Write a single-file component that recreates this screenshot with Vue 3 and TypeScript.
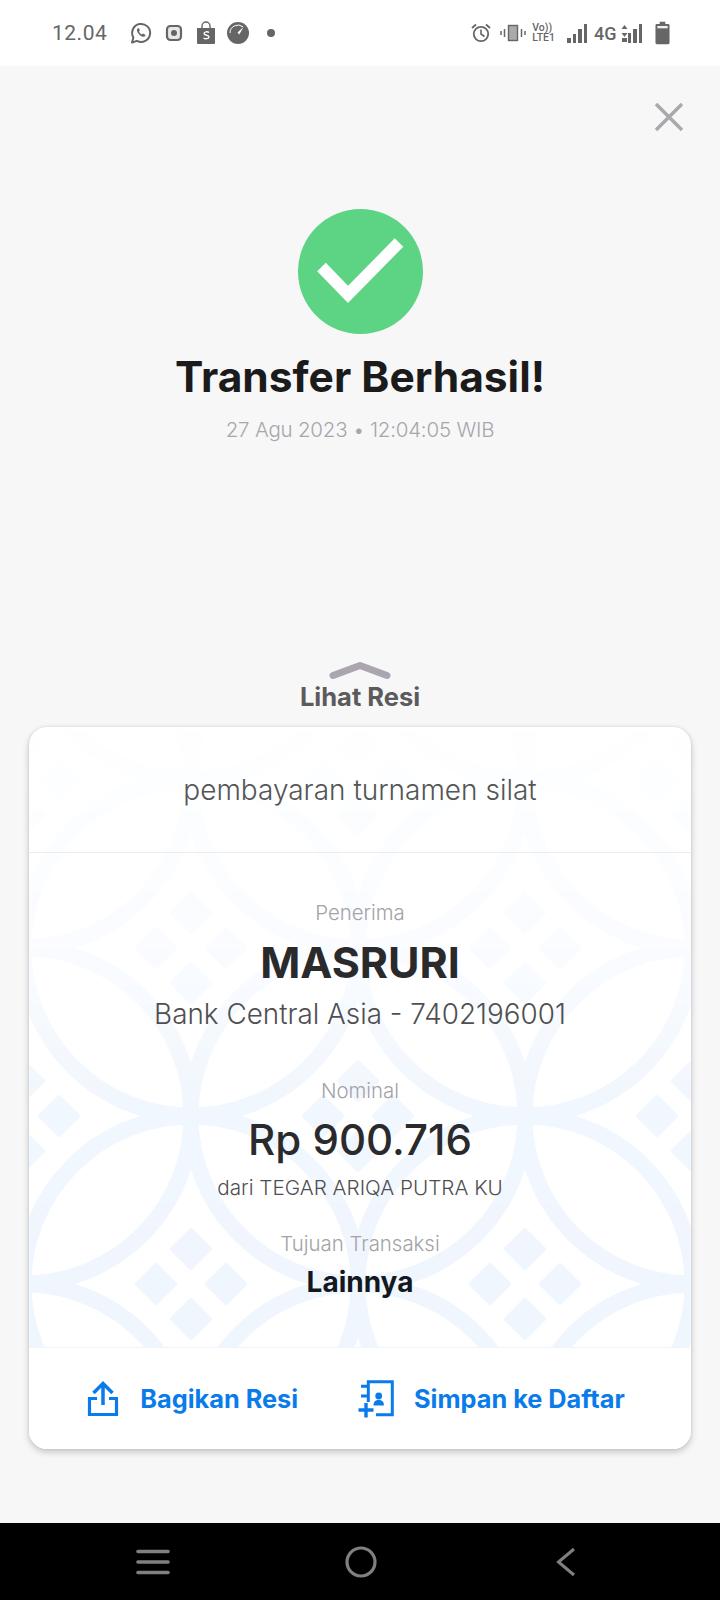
<template>
  <div class="screen">
    <header class="status-bar">
      <div class="status-left">
        <span class="clock">12.04</span>
        <svg width="24" height="24" viewBox="0 0 24 24" style="margin-left:22px"><path d="M3 21.500l1.400-5A9 9 0 1 1 8 19.900z" fill="none" stroke="#666" stroke-width="2" stroke-linejoin="round"/><path d="M8.600 7.500c-1 1-.9 2.700.5 4.700 1.500 2 3.300 3.300 5.200 3.500 1 .1 2.200-.8 2.200-1.800l-2.400-1.300-1.100 1c-1.200-.4-2.600-1.900-3-3.100l.9-1.100-1.100-2.400z" fill="#666"/></svg>
        <svg width="18" height="18" viewBox="0 0 18 18" style="margin-left:12px"><rect x="2" y="2" width="14" height="14" rx="3.500" fill="#e8e8e8" stroke="#666" stroke-width="2.200"/><circle cx="9" cy="9" r="3" fill="#666"/></svg>
        <svg width="20" height="24" viewBox="0 0 20 24" style="margin-left:13px"><path d="M1 7h18v15a1 1 0 0 1-1 1H2a1 1 0 0 1-1-1z" fill="#666"/><path d="M6 7V5a4 4 0 0 1 8 0v2" fill="none" stroke="#666" stroke-width="1.400"/><path d="M13 11.500c-1-1-5-1.200-5 1 0 2.200 5 1.300 5 3.500 0 2.200-4 2-5.500 1" fill="none" stroke="#fff" stroke-width="1.300"/></svg>
        <svg width="24" height="24" viewBox="0 0 24 24" style="margin-left:10px"><circle cx="12" cy="12" r="11" fill="#666"/><path d="M4 12a8 8 0 0 1 13-6.200" fill="none" stroke="#fff" stroke-width="1"/><path d="M17.500 6l-6 5.500 1.800 2z" fill="#fff"/></svg>
        <span class="dot"></span>
      </div>
      <div class="status-right">
        <svg width="20" height="20" viewBox="0 0 20 20"><circle cx="10" cy="11" r="7.200" fill="none" stroke="#666" stroke-width="1.800"/><path d="M10 6.500V11l3.500 2.500" fill="none" stroke="#666" stroke-width="1.600"/><path d="M1 5l4-3.500M19 5l-4-3.500" stroke="#666" stroke-width="1.800"/></svg>
        <svg width="26" height="18" viewBox="0 0 26 18" style="margin-left:9px"><rect x="8.500" y="1.500" width="9" height="15" fill="#aaa" stroke="#666" stroke-width="1.400"/><path d="M1 7v4M4.500 5v8M21.500 5v8M25 7v4" stroke="#666" stroke-width="1.500"/></svg>
        <div class="volte"><span>Vo))</span><span>LTE1</span></div>
        <div class="bars four">
          <i style="height:5px"></i><i style="height:9px"></i><i style="height:14px"></i><i style="height:19px"></i>
        </div>
        <span class="net">4G</span>
        <svg width="7" height="18" viewBox="0 0 7 18" style="margin-left:4px"><path d="M3.500 1l3 4h-6zM3.500 13l3-4h-6z" fill="#666"/><rect x="1" y="14" width="5" height="4" fill="#666"/></svg>
        <div class="bars three">
          <i style="height:10px"></i><i style="height:14px"></i><i style="height:19px"></i>
        </div>
        <svg width="15" height="24" viewBox="0 0 16 24" style="margin-left:13px"><path d="M5 0h6v2.500h3a1.500 1.500 0 0 1 1.500 1.500v18.500A1.500 1.500 0 0 1 14 24H2a1.500 1.500 0 0 1-1.500-1.500V4A1.500 1.500 0 0 1 2 2.500h3z" fill="#666"/><rect x="2.500" y="4.500" width="11" height="2.500" fill="#eee"/></svg>
      </div>
    </header>

    <main class="content">
      <button class="close" aria-label="Tutup">
        <svg width="32" height="32" viewBox="0 0 32 32"><path d="M3 3l26 26M29 3L3 29" stroke="#aaa7ad" stroke-width="3.400"/></svg>
      </button>

      <section class="result">
        <div class="check">
          <svg width="125" height="125" viewBox="0 0 125 125"><path d="M23.500 58L50 85.500l51-52" fill="none" stroke="#fff" stroke-width="12"/></svg>
        </div>
        <h1 class="title">Transfer Berhasil!</h1>
        <p class="stamp">27 Agu 2023 • 12:04:05 WIB</p>
      </section>

      <div class="handle">
        <svg width="62" height="18" viewBox="0 0 62 18"><path d="M4 13.500L31 3.500l27 10" fill="none" stroke="#aaa5ae" stroke-width="7" stroke-linecap="round" stroke-linejoin="round"/></svg>
        <span>Lihat Resi</span>
      </div>

      <article class="card">
        <svg class="pattern" width="662" height="620" viewBox="0 0 662 620" aria-hidden="true">
          <g fill="none" stroke="#f0f6fe" stroke-width="16">
            <circle v-for="c in rings" :key="c.id" :cx="c.x" :cy="c.y" r="167.500" />
          </g>
          <g fill="#f0f6fe">
            <rect v-for="d in diamonds" :key="d.id" :x="d.x - 15.500" :y="d.y - 15.500" width="31" height="31" rx="2" :transform="`rotate(45 ${d.x} ${d.y})`" />
          </g>
        </svg>
        <div class="memo">pembayaran turnamen silat</div>
        <div class="details">
          <div class="block">
            <p class="label">Penerima</p>
            <p class="name">MASRURI</p>
            <p class="sub large">Bank Central Asia - 7402196001</p>
          </div>
          <div class="block nominal">
            <p class="label">Nominal</p>
            <p class="amount">Rp 900.716</p>
            <p class="sub">dari TEGAR ARIQA PUTRA KU</p>
          </div>
          <div class="block purpose">
            <p class="label">Tujuan Transaksi</p>
            <p class="value">Lainnya</p>
          </div>
        </div>
        <div class="actions">
          <button class="action">
            <svg width="34" height="38" viewBox="0 0 34 38"><path d="M11 18.500H3.500v16h27v-16H23" fill="none" stroke="#0a7bea" stroke-width="3.200"/><path d="M17 25V4M7.500 13L17 3.500l9.500 9.500" fill="none" stroke="#0a7bea" stroke-width="3.500"/></svg>
            <span>Bagikan Resi</span>
          </button>
          <button class="action">
            <svg width="36" height="38" viewBox="0 0 36 38"><path d="M18 34.700h16.300V1.700h-24V22M3 6.300h7.300M3 16h7.300" fill="none" stroke="#0a7bea" stroke-width="3"/><path d="M.5 30h15M8 23v14.500" stroke="#0a7bea" stroke-width="3.400"/><circle cx="20.700" cy="16" r="3.400" fill="#0a7bea"/><path d="M15.500 25.500c0-4 2-5.500 5.200-5.500s5.200 1.500 5.200 5.500z" fill="#0a7bea"/></svg>
            <span>Simpan ke Daftar</span>
          </button>
        </div>
      </article>
    </main>

    <footer class="nav-bar">
      <svg width="34" height="26" viewBox="0 0 34 26"><path d="M2 2.500h30M2 13h30M2 23.500h30" stroke="#808080" stroke-width="3.600" stroke-linecap="round"/></svg>
      <svg class="home" width="32" height="32" viewBox="0 0 32 32"><circle cx="16" cy="16" r="14" fill="none" stroke="#808080" stroke-width="3.200"/></svg>
      <svg width="20" height="30" viewBox="0 0 20 30"><path d="M18 2L2.500 15 18 28" fill="none" stroke="#808080" stroke-width="3"/></svg>
    </footer>
  </div>
</template>

<script setup lang="ts">
interface Point { id: string; x: number; y: number }

// kawung lattice: each ring sits on a checkerboard, half a tile apart
const halfX = 167
const halfY = 168
const originX = 162
const originY = 221

const rings: Point[] = []
const diamonds: Point[] = []
for (let row = -2; row < 4; row++) {
  for (let col = -1; col < 5; col++) {
    if ((row + col) % 2 !== 0) continue
    const x = originX + (col - 1) * halfX + halfX
    const y = originY + row * halfY
    rings.push({ id: `${row}-${col}`, x, y })
    ;[[0, -35], [-35, 0], [35, 0], [0, 35]].forEach(([dx, dy], i) => {
      diamonds.push({ id: `${row}-${col}-${i}`, x: x + dx, y: y + dy })
    })
  }
}
</script>

<style>
html, body { margin: 0; background: #f7f7f8; }
</style>

<style scoped>
.screen {
  width: 720px;
  height: 1600px;
  display: flex;
  flex-direction: column;
  background: #f7f7f8;
  font-family: Inter, "Liberation Sans", sans-serif;
  overflow: hidden;
}
.status-bar {
  height: 66px;
  flex: none;
  background: #fff;
  display: flex;
  align-items: center;
  justify-content: space-between;
  padding: 0 50px 0 52px;
  color: #666;
}
.status-left, .status-right {
  display: flex;
  align-items: center;
}
.clock {
  font-family: Roboto, sans-serif;
  font-size: 21px;
  letter-spacing: 0.5px;
}
.dot {
  width: 8px;
  height: 8px;
  border-radius: 50%;
  background: #666;
  margin-left: 17px;
}
.volte {
  margin-left: 6px;
  display: flex;
  flex-direction: column;
  font-family: Roboto, sans-serif;
  font-size: 10.500px;
  line-height: 10px;
  font-weight: 500;
}
.bars {
  display: flex;
  align-items: flex-end;
  gap: 2px;
  height: 19px;
}
.bars i {
  width: 3.500px;
  background: #666;
}
.bars.four { margin-left: 12px; }
.net {
  font-family: Roboto, sans-serif;
  font-size: 18px;
  font-weight: 500;
  margin-left: 7px;
}
.content {
  flex: 1;
  position: relative;
  display: flex;
  flex-direction: column;
  align-items: center;
  min-height: 0;
}
.close {
  position: absolute;
  top: 35px;
  right: 35px;
  width: 32px;
  height: 32px;
  padding: 0;
  border: 0;
  background: none;
}
.result {
  margin-top: 143px;
  display: flex;
  flex-direction: column;
  align-items: center;
}
.check {
  width: 125px;
  height: 125px;
  border-radius: 50%;
  background: #5dd384;
}
.title {
  margin: 18px 0 0;
  font-size: 42.500px;
  line-height: 50px;
  font-weight: 700;
  color: #1b1b1b;
}
.stamp {
  margin: 14px 0 0;
  font-size: 20.500px;
  line-height: 28px;
  letter-spacing: -0.2px;
  font-weight: 300;
  color: #a6a6ac;
}
.handle {
  margin-top: 218px;
  display: flex;
  flex-direction: column;
  align-items: center;
  font-size: 25.500px;
  line-height: 30px;
  font-weight: 700;
  color: #5d5a5c;
}
.handle svg {
  display: block;
  margin-bottom: 2px;
}
.card {
  position: relative;
  margin-top: 15px;
  width: 662px;
  height: 722px;
  flex: none;
  display: flex;
  flex-direction: column;
  background: #fff;
  border-radius: 18px;
  box-shadow: 0 3px 7px rgba(0, 0, 0, 0.2), 0 0 3px rgba(0, 0, 0, 0.1);
  overflow: hidden;
}
.pattern {
  position: absolute;
  left: 0;
  top: 0;
  /* pattern fades out towards the top of the card */
  -webkit-mask-image: linear-gradient(to bottom, rgba(0, 0, 0, 0.05), rgba(0, 0, 0, 0.35) 35%, rgba(0, 0, 0, 0.9) 60%, #000);
  mask-image: linear-gradient(to bottom, rgba(0, 0, 0, 0.05), rgba(0, 0, 0, 0.35) 35%, rgba(0, 0, 0, 0.9) 60%, #000);
}
.memo {
  position: relative;
  height: 126px;
  flex: none;
  display: flex;
  align-items: center;
  justify-content: center;
  font-size: 28px;
  font-weight: 300;
  color: #555;
  border-bottom: 1px solid #ececef;
  box-sizing: border-box;
}
.details {
  position: relative;
  flex: 1;
  min-height: 0;
  text-align: center;
  padding-top: 48px;
}
.block p { margin: 0; }
.label {
  font-size: 20.400px;
  line-height: 24px;
  font-weight: 300;
  color: #a2a2a8;
}
.name {
  margin-top: 9px !important;
  font-size: 43px;
  line-height: 56px;
  font-weight: 700;
  color: #2a2a2d;
}
.sub {
  margin-top: 7px !important;
  font-size: 20.700px;
  line-height: 28px;
  font-weight: 300;
  color: #4f4f52;
}
.sub.large {
  margin-top: 6px !important;
  font-size: 27.850px;
  line-height: 36px;
}
.nominal { margin-top: 47px; }
.amount {
  margin-top: 10px !important;
  font-size: 42px;
  line-height: 54px;
  font-weight: 500;
  color: #2a2a2d;
}
.purpose { margin-top: 30px; }
.value {
  margin-top: 10px !important;
  font-size: 28px;
  line-height: 32px;
  font-weight: 700;
  color: #14181f;
}
.actions {
  position: relative;
  height: 102px;
  flex: none;
  box-sizing: border-box;
  border-top: 1px solid #f0f3f8;
  background: #fff;
  display: flex;
  align-items: center;
  justify-content: center;
  gap: 60px;
  padding-right: 9px;
}
.action {
  display: flex;
  align-items: center;
  gap: 20px;
  padding: 0;
  border: 0;
  background: none;
  font-family: inherit;
  font-size: 25.300px;
  font-weight: 700;
  color: #0a7bea;
}
.nav-bar {
  height: 77px;
  flex: none;
  background: #000;
  display: flex;
  align-items: center;
  justify-content: space-between;
  padding: 0 144px 0 136px;
}
.home { margin-right: 5px; }
</style>
